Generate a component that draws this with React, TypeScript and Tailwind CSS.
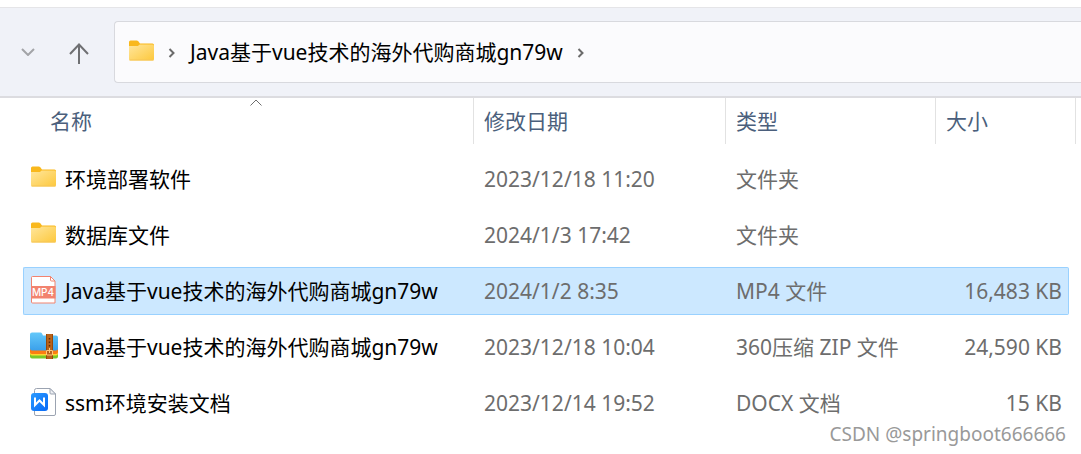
import React from 'react';
import { clsx } from 'clsx';

type FileKind = 'folder' | 'mp4' | 'zip' | 'docx';

interface FileEntry {
  name: string;
  modified: string;
  type: string;
  size?: string;
  kind: FileKind;
  selected?: boolean;
}

const files: FileEntry[] = [
  { name: '环境部署软件', modified: '2023/12/18 11:20', type: '文件夹', kind: 'folder' },
  { name: '数据库文件', modified: '2024/1/3 17:42', type: '文件夹', kind: 'folder' },
  {
    name: 'Java基于vue技术的海外代购商城gn79w',
    modified: '2024/1/2 8:35',
    type: 'MP4 文件',
    size: '16,483 KB',
    kind: 'mp4',
    selected: true,
  },
  {
    name: 'Java基于vue技术的海外代购商城gn79w',
    modified: '2023/12/18 10:04',
    type: '360压缩 ZIP 文件',
    size: '24,590 KB',
    kind: 'zip',
  },
  { name: 'ssm环境安装文档', modified: '2023/12/14 19:52', type: 'DOCX 文档', size: '15 KB', kind: 'docx' },
];

const FolderIcon: React.FC<{ id: string }> = ({ id }) => (
  <svg width="28" height="28" viewBox="0 0 28 28" className="shrink-0" aria-hidden="true">
    <defs>
      <linearGradient id={id} x1="0" y1="0" x2="1" y2="1">
        <stop offset="0" stopColor="#ffe69c" />
        <stop offset="1" stopColor="#fdc83c" />
      </linearGradient>
    </defs>
    <path d="M1 4Q1 2.500 2.500 2.500h6.200q.8 0 1.400.6L12 5.500h12.500q1.500 0 1.500 1.500V13H1z" fill="#f9b81c" />
    <path d="M1 8h8.200q.7 0 1.300-.5l1.200-1h12.800q1.500 0 1.500 1.500v13q0 1.500-1.500 1.500h-22Q1 22.500 1 21z" fill={`url(#${id})`} />
    <path d="M1.500 22h24" stroke="#f5c558" strokeWidth="1" />
  </svg>
);

const Mp4Icon = () => (
  <svg width="28" height="28" viewBox="0 0 28 28" className="shrink-0" aria-hidden="true">
    <path d="M2.500.5h18l4.500 4.500v22h-22.500q-1 0-1-1v-24.500q0-1 1-1z" fill="#fff" stroke="#f2836f" />
    <path d="M20.500.5v3.500q0 1 1 1h3.500z" fill="#fff" stroke="#f2836f" />
    <path d="M1 10h24.500v12.500H1z" fill="#f2836f" />
    <text x="13" y="20" textAnchor="middle" fontSize="10" fontWeight="500" fill="#fff" fontFamily="Inter, sans-serif">
      MP4
    </text>
  </svg>
);

const ZipIcon = () => (
  <svg width="28" height="28" viewBox="0 0 28 28" className="shrink-0" aria-hidden="true">
    <defs>
      <linearGradient id="zip-blue" x1="0" y1="0" x2="0" y2="1">
        <stop offset="0" stopColor="#63c8fa" />
        <stop offset="1" stopColor="#3ba0ea" />
      </linearGradient>
    </defs>
    <path d="M0 17h28v7.500q0 2-2 2H2q-2 0-2-2z" fill="#7bc828" />
    <path d="M0 16h28v5.500q0 2-2 2H2q-2 0-2-2z" fill="#ffd52e" />
    <path d="M0 15h28v5q0 2-2 2H2q-2 0-2-2z" fill="#fb7d12" />
    <path d="M0 2.500q0-2 2-2h8.500q1 0 1.500 1l1 2h13q2 0 2 2v11q0 2-2 2H2q-2 0-2-2z" fill="url(#zip-blue)" />
    <path d="M16 2h7v25h-7z" fill="#b9621a" />
    <path d="M16.500 2v25M22.500 2v25" stroke="#984806" />
    <path d="M19.500 6v1.500m0 2v1.500m0 2v1.500" stroke="#5f2c05" strokeWidth="1.500" />
    <path d="M16.500 18.500h6v4.500h-6zM19.500 16v5" fill="none" stroke="#ffc878" />
  </svg>
);

const DocxIcon = () => (
  <svg width="28" height="28" viewBox="0 0 28 28" className="shrink-0" aria-hidden="true">
    <defs>
      <linearGradient id="docx-blue" x1="0" y1="0" x2="1" y2="1">
        <stop offset="0" stopColor="#2b9bff" />
        <stop offset="1" stopColor="#0769f7" />
      </linearGradient>
    </defs>
    <path d="M6.500.5H20l5.500 5.500v20q0 1.500-1.500 1.500H6q-1.500 0-1.500-1.500V2.500q0-2 2-2z" fill="#fff" stroke="#9ba3b1" />
    <path d="M20 .5V5q0 1 1 1h4.500z" fill="#eef0f4" stroke="#9ba3b1" />
    <rect x="1" y="5" width="17" height="18" rx="3" fill="url(#docx-blue)" />
    <path d="M5 9.500v7.500L9.500 12.500 14 17V9.500" fill="none" stroke="#fff" strokeWidth="2" />
  </svg>
);

const FileIcon: React.FC<{ kind: FileKind; id: string }> = ({ kind, id }) => {
  if (kind === 'mp4') return <Mp4Icon />;
  if (kind === 'zip') return <ZipIcon />;
  if (kind === 'docx') return <DocxIcon />;
  return <FolderIcon id={id} />;
};

const Crumb = () => (
  <svg width="8" height="12" viewBox="0 0 8 12" fill="none" className="shrink-0" aria-hidden="true">
    <path d="M1.500 3l4 4-4 4" stroke="#6b6b6b" strokeWidth="2" />
  </svg>
);

const Toolbar = () => (
  <nav className="mt-[7px] flex items-center border-t border-b-2 border-t-[#e5e5e8] border-b-[#dcdce0] bg-[#f0f2f8] py-[13px] pl-4">
    <button type="button" aria-label="最近浏览的位置" className="flex size-6 items-center justify-center">
      <svg width="14" height="8" viewBox="0 0 14 8" fill="none" aria-hidden="true">
        <path d="M1 1l6 6 6-6" stroke="#a3a4a8" strokeWidth="2" />
      </svg>
    </button>
    <button type="button" aria-label="上移" className="ml-[27px] flex size-6 items-center justify-center">
      <svg width="20" height="22" viewBox="0 0 20 22" fill="none" className="mt-1" aria-hidden="true">
        <path d="M10 21V2M1 11l9-9.500 9 9.500" stroke="#6f7073" strokeWidth="2" />
      </svg>
    </button>
    <div className="ml-[23px] flex h-[62px] flex-1 items-center rounded-l border border-r-0 border-[#d8d9de] bg-[#fbfbfd] pl-[13px]">
      <FolderIcon id="folder-address" />
      <div className="ml-3 flex items-center gap-[14px]">
        <Crumb />
        <button type="button" className="text-[21px] leading-7 text-black">
          Java基于vue技术的海外代购商城gn79w
        </button>
        <Crumb />
      </div>
    </div>
  </nav>
);

const HeaderCell: React.FC<{ label: string; sorted?: boolean }> = ({ label, sorted = false }) => (
  <th scope="col" className="h-[53px] p-0 text-left align-top font-normal" aria-sort={sorted ? 'ascending' : undefined}>
    <div
      className={clsx(
        'relative flex h-[46px] items-center border-r border-[#e2e2e2]',
        sorted ? 'pl-[27px]' : 'pl-[10px]'
      )}
    >
      <button type="button" className="text-[21px] leading-7 text-[#4b5f7c]">
        {label}
      </button>
      {sorted && (
        <svg width="12" height="7" viewBox="0 0 12 7" fill="none" className="absolute top-px left-1/2 ml-0.5" aria-hidden="true">
          <path d="M.5 6.500l5.500-5.500 5.500 5.500" stroke="#6e6e6e" />
        </svg>
      )}
    </div>
  </th>
);

const FileRow: React.FC<{ file: FileEntry; index: number }> = ({ file, index }) => {
  const cell = clsx(
    'flex h-12 items-center border-y text-[21px] leading-7 whitespace-nowrap',
    file.selected ? 'border-[#99d1ff] bg-[#cce8ff]' : 'border-transparent'
  );

  return (
    <tr aria-selected={file.selected}>
      <td className="px-0 py-1">
        <div className={clsx(cell, 'rounded-l-xs border-l pl-[6px] text-black')}>
          <div className="pb-0.5">
            <FileIcon kind={file.kind} id={`folder-${index}`} />
          </div>
          <span className="ml-[7px]">{file.name}</span>
        </div>
      </td>
      <td className="px-0 py-1">
        <div className={clsx(cell, 'pl-[10px]')}>{file.modified}</div>
      </td>
      <td className="px-0 py-1">
        <div className={clsx(cell, 'pl-[10px]')}>{file.type}</div>
      </td>
      <td className="py-1 pr-[7px] pl-0">
        <div className={clsx(cell, 'justify-end rounded-r-xs border-r pr-[6px]')}>{file.size}</div>
      </td>
    </tr>
  );
};

const App = () => {
  return (
    <div className="relative flow-root min-h-screen bg-white font-['Noto_Sans','Noto_Sans_CJK_SC',sans-serif]">
      <Toolbar />
      <main className="pr-[5px] pl-[23px]">
        <table className="w-full table-fixed border-separate border-spacing-0 text-[#6d6d6d]">
          <colgroup>
            <col />
            <col className="w-[252px]" />
            <col className="w-[210px]" />
            <col className="w-[140px]" />
          </colgroup>
          <thead>
            <tr>
              <HeaderCell label="名称" sorted />
              <HeaderCell label="修改日期" />
              <HeaderCell label="类型" />
              <HeaderCell label="大小" />
            </tr>
          </thead>
          <tbody>
            {files.map((file, index) => (
              <FileRow key={index} file={file} index={index} />
            ))}
          </tbody>
        </table>
      </main>
      <p className="absolute right-[15px] bottom-2 text-[19px] leading-6 text-[#999999]">CSDN @springboot666666</p>
    </div>
  );
};

export default App;
